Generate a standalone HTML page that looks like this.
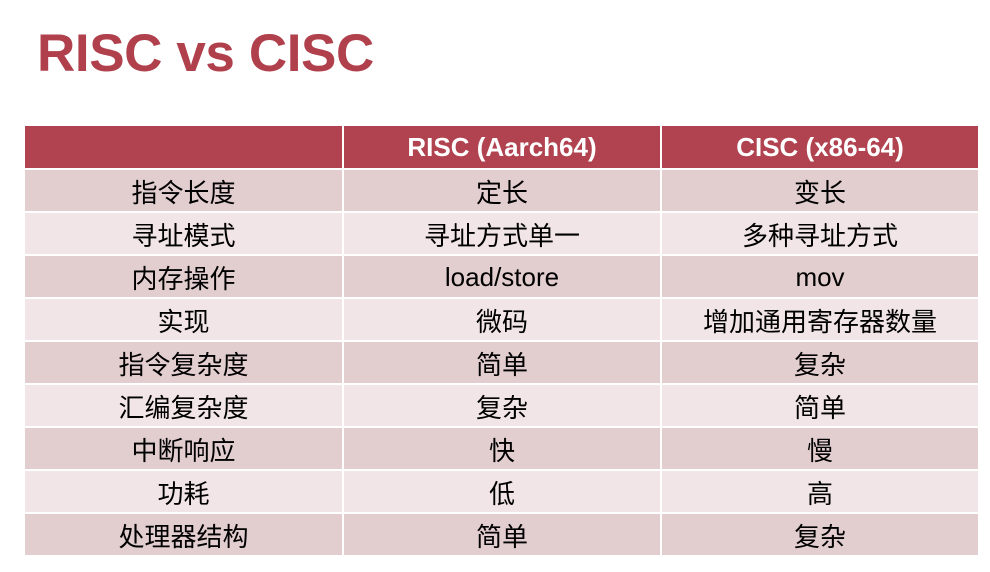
<!DOCTYPE html>
<html><head><meta charset="utf-8"><style>
body{margin:0;width:990px;height:572px;background:#fff;position:relative;overflow:hidden;font-family:"Liberation Sans","Noto Sans CJK SC",sans-serif}
h1{position:absolute;left:37px;top:24px;margin:0;font-size:53px;line-height:60px;font-weight:bold;color:#b0404c;letter-spacing:-0.4px}
.c{position:absolute;display:flex;align-items:center;justify-content:center;font-size:26px;color:#000;padding-top:1px;box-sizing:border-box}
.h{background:#b0434f;color:#fff;font-weight:bold;font-size:26px}
.d{background:#e2cdcf}.l{background:#f1e5e7}
</style></head><body>
<h1>RISC vs CISC</h1>
<div id="t"></div>
<script>
var rows=[["","RISC (Aarch64)","CISC (x86-64)"],["指令长度","定长","变长"],["寻址模式","寻址方式单一","多种寻址方式"],["内存操作","load/store","mov"],["实现","微码","增加通用寄存器数量"],["指令复杂度","简单","复杂"],["汇编复杂度","复杂","简单"],["中断响应","快","慢"],["功耗","低","高"],["处理器结构","简单","复杂"]];
var xs=[[25,342],[344,660],[662,978]],h="";
rows.forEach(function(r,i){var top=i==0?126:170+(i-1)*43,ht=i==0?42:41;var cls=i==0?"h":(i%2?"d":"l");
r.forEach(function(t,j){h+='<div class="c '+cls+'" style="left:'+xs[j][0]+'px;width:'+(xs[j][1]-xs[j][0])+'px;top:'+top+'px;height:'+ht+'px">'+t+'</div>';});});
document.getElementById("t").innerHTML=h;
</script>
</body></html>
